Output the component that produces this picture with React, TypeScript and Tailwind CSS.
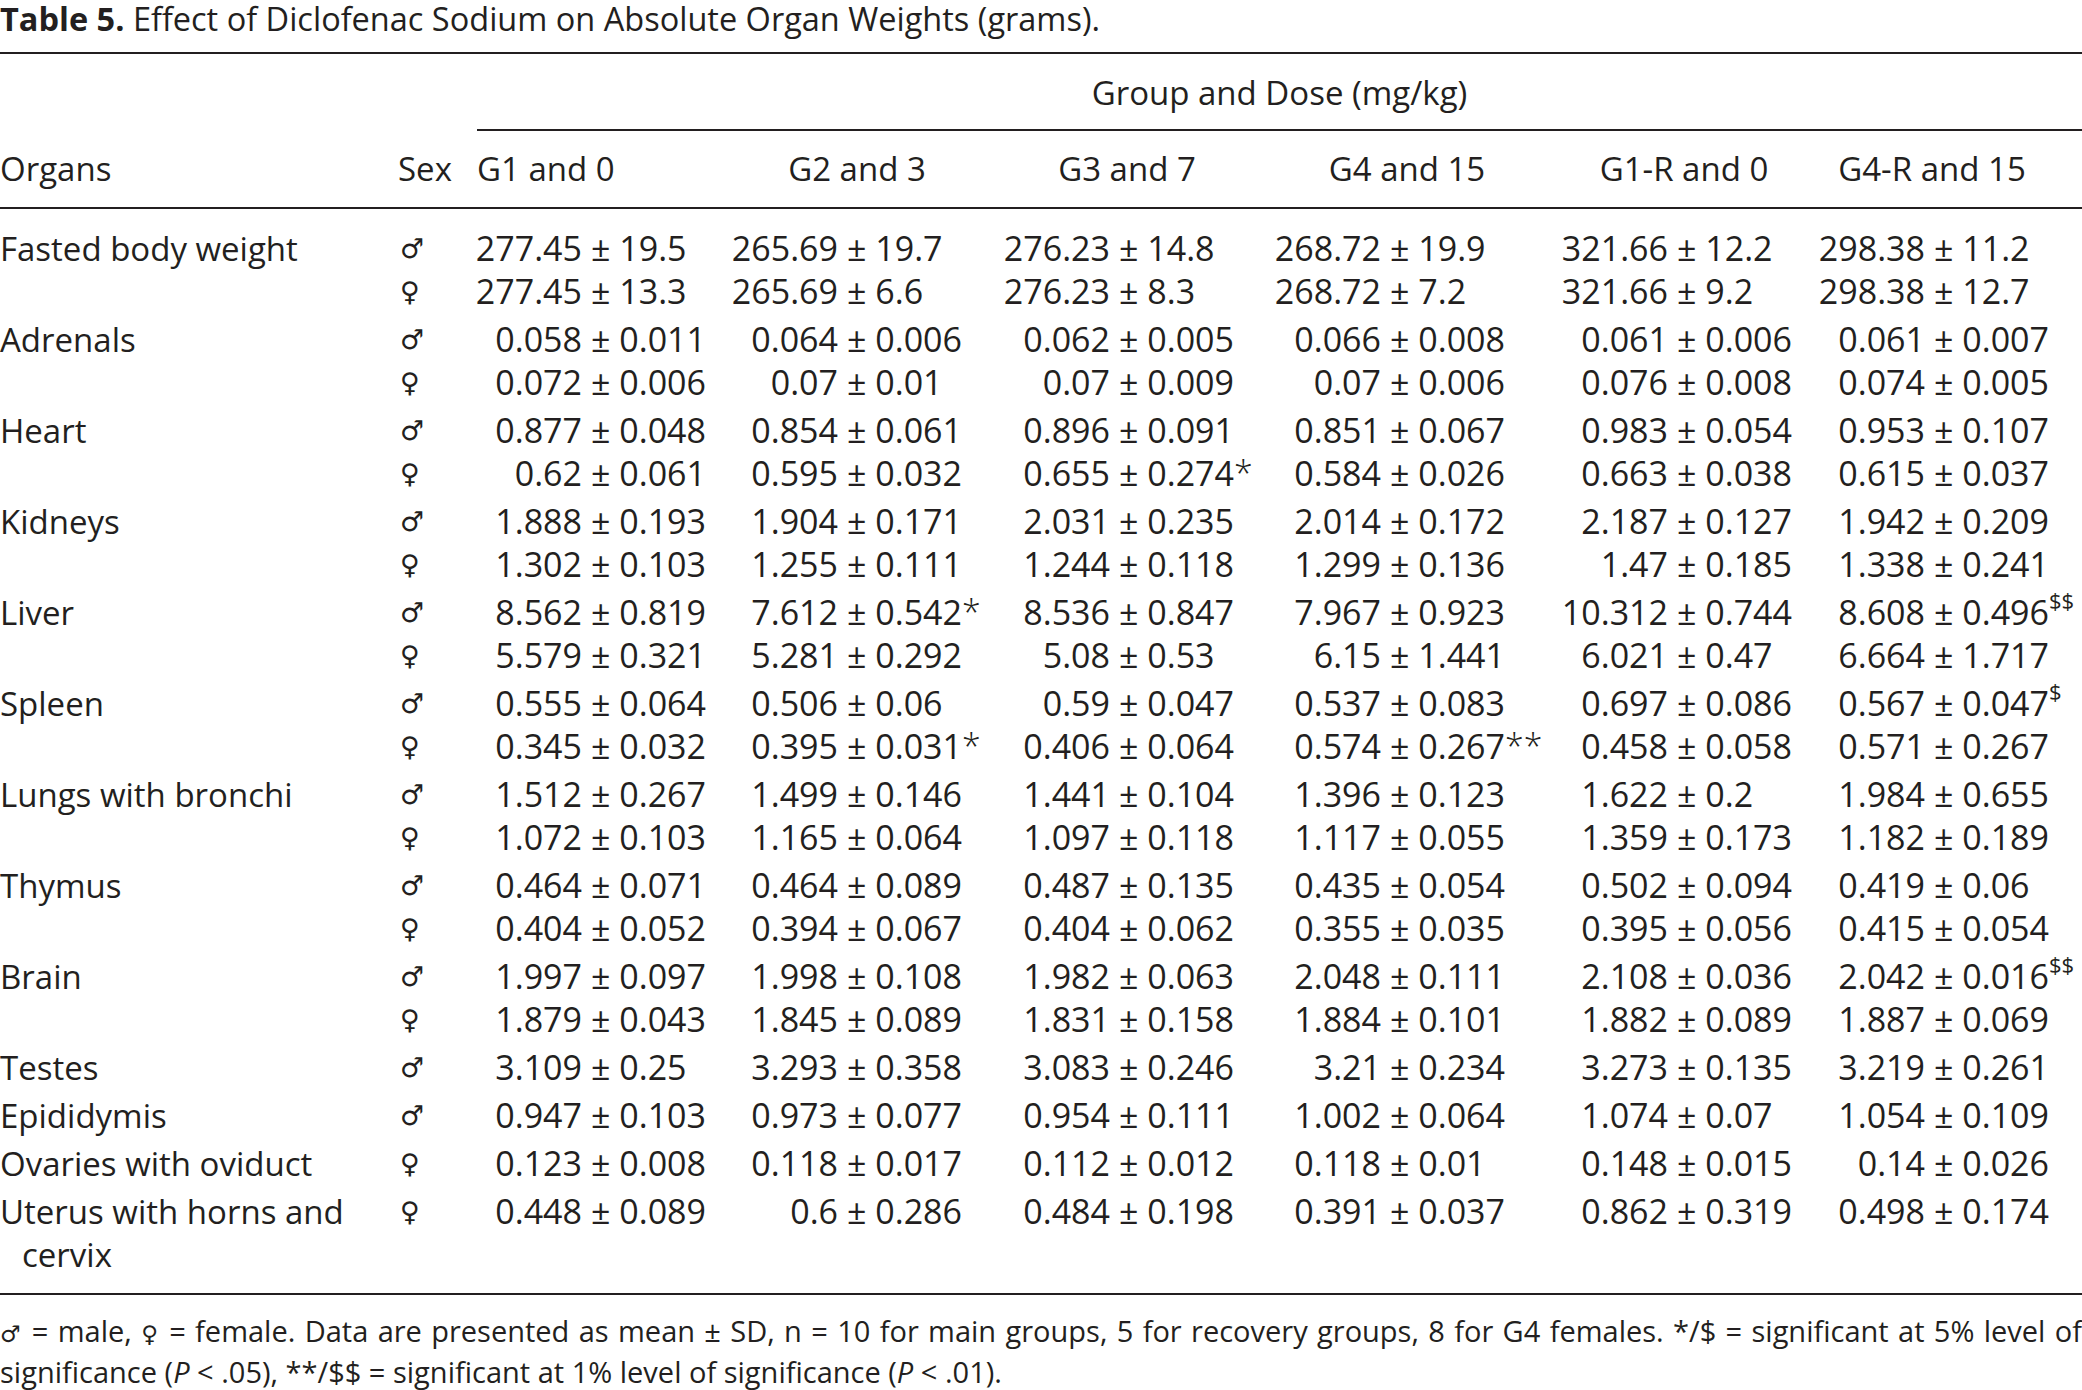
const GRID =
  "grid grid-cols-[398px_62px_131px_134px_122px_138px_134px_141px_130px_150px_137px_123px_134px_148px]";

type Row = { sex: "♂" | "♀"; values: string[] };
type Organ = { name: string; rows: Row[] };

const ORGANS: Organ[] = [
  {
    name: "Fasted body weight",
    rows: [
      { sex: "♂", values: ["277.45 ± 19.5", "265.69 ± 19.7", "276.23 ± 14.8", "268.72 ± 19.9", "321.66 ± 12.2", "298.38 ± 11.2"] },
      { sex: "♀", values: ["277.45 ± 13.3", "265.69 ± 6.6", "276.23 ± 8.3", "268.72 ± 7.2", "321.66 ± 9.2", "298.38 ± 12.7"] },
    ],
  },
  {
    name: "Adrenals",
    rows: [
      { sex: "♂", values: ["0.058 ± 0.011", "0.064 ± 0.006", "0.062 ± 0.005", "0.066 ± 0.008", "0.061 ± 0.006", "0.061 ± 0.007"] },
      { sex: "♀", values: ["0.072 ± 0.006", "0.07 ± 0.01", "0.07 ± 0.009", "0.07 ± 0.006", "0.076 ± 0.008", "0.074 ± 0.005"] },
    ],
  },
  {
    name: "Heart",
    rows: [
      { sex: "♂", values: ["0.877 ± 0.048", "0.854 ± 0.061", "0.896 ± 0.091", "0.851 ± 0.067", "0.983 ± 0.054", "0.953 ± 0.107"] },
      { sex: "♀", values: ["0.62 ± 0.061", "0.595 ± 0.032", "0.655 ± 0.274*", "0.584 ± 0.026", "0.663 ± 0.038", "0.615 ± 0.037"] },
    ],
  },
  {
    name: "Kidneys",
    rows: [
      { sex: "♂", values: ["1.888 ± 0.193", "1.904 ± 0.171", "2.031 ± 0.235", "2.014 ± 0.172", "2.187 ± 0.127", "1.942 ± 0.209"] },
      { sex: "♀", values: ["1.302 ± 0.103", "1.255 ± 0.111", "1.244 ± 0.118", "1.299 ± 0.136", "1.47 ± 0.185", "1.338 ± 0.241"] },
    ],
  },
  {
    name: "Liver",
    rows: [
      { sex: "♂", values: ["8.562 ± 0.819", "7.612 ± 0.542*", "8.536 ± 0.847", "7.967 ± 0.923", "10.312 ± 0.744", "8.608 ± 0.496$$"] },
      { sex: "♀", values: ["5.579 ± 0.321", "5.281 ± 0.292", "5.08 ± 0.53", "6.15 ± 1.441", "6.021 ± 0.47", "6.664 ± 1.717"] },
    ],
  },
  {
    name: "Spleen",
    rows: [
      { sex: "♂", values: ["0.555 ± 0.064", "0.506 ± 0.06", "0.59 ± 0.047", "0.537 ± 0.083", "0.697 ± 0.086", "0.567 ± 0.047$"] },
      { sex: "♀", values: ["0.345 ± 0.032", "0.395 ± 0.031*", "0.406 ± 0.064", "0.574 ± 0.267**", "0.458 ± 0.058", "0.571 ± 0.267"] },
    ],
  },
  {
    name: "Lungs with bronchi",
    rows: [
      { sex: "♂", values: ["1.512 ± 0.267", "1.499 ± 0.146", "1.441 ± 0.104", "1.396 ± 0.123", "1.622 ± 0.2", "1.984 ± 0.655"] },
      { sex: "♀", values: ["1.072 ± 0.103", "1.165 ± 0.064", "1.097 ± 0.118", "1.117 ± 0.055", "1.359 ± 0.173", "1.182 ± 0.189"] },
    ],
  },
  {
    name: "Thymus",
    rows: [
      { sex: "♂", values: ["0.464 ± 0.071", "0.464 ± 0.089", "0.487 ± 0.135", "0.435 ± 0.054", "0.502 ± 0.094", "0.419 ± 0.06"] },
      { sex: "♀", values: ["0.404 ± 0.052", "0.394 ± 0.067", "0.404 ± 0.062", "0.355 ± 0.035", "0.395 ± 0.056", "0.415 ± 0.054"] },
    ],
  },
  {
    name: "Brain",
    rows: [
      { sex: "♂", values: ["1.997 ± 0.097", "1.998 ± 0.108", "1.982 ± 0.063", "2.048 ± 0.111", "2.108 ± 0.036", "2.042 ± 0.016$$"] },
      { sex: "♀", values: ["1.879 ± 0.043", "1.845 ± 0.089", "1.831 ± 0.158", "1.884 ± 0.101", "1.882 ± 0.089", "1.887 ± 0.069"] },
    ],
  },
  {
    name: "Testes",
    rows: [{ sex: "♂", values: ["3.109 ± 0.25", "3.293 ± 0.358", "3.083 ± 0.246", "3.21 ± 0.234", "3.273 ± 0.135", "3.219 ± 0.261"] }],
  },
  {
    name: "Epididymis",
    rows: [{ sex: "♂", values: ["0.947 ± 0.103", "0.973 ± 0.077", "0.954 ± 0.111", "1.002 ± 0.064", "1.074 ± 0.07", "1.054 ± 0.109"] }],
  },
  {
    name: "Ovaries with oviduct",
    rows: [{ sex: "♀", values: ["0.123 ± 0.008", "0.118 ± 0.017", "0.112 ± 0.012", "0.118 ± 0.01", "0.148 ± 0.015", "0.14 ± 0.026"] }],
  },
  {
    name: "Uterus with horns and cervix",
    rows: [{ sex: "♀", values: ["0.448 ± 0.089", "0.6 ± 0.286", "0.484 ± 0.198", "0.391 ± 0.037", "0.862 ± 0.319", "0.498 ± 0.174"] }],
  },
];

const SYMBOL = "font-['DejaVu_Sans',sans-serif] font-normal text-[27px]";

function Value({ v }: { v: string }) {
  const [mean, rest] = v.split(" ± ");
  const m = rest.match(/^([\d.]+)(\**)(\$*)$/);
  const sd = m ? m[1] : rest;
  const stars = m ? m[2] : "";
  const dollars = m ? m[3] : "";
  return (
    <>
      <div className="text-right pr-[9px] whitespace-nowrap text-[34px]">{mean}</div>
      <div className="whitespace-nowrap text-[34px]">
        ± {sd}
        {stars && <span className="font-light">{stars}</span>}
        {dollars && <sup className="text-[22px] -top-[16px]">{dollars}</sup>}
      </div>
    </>
  );
}

function OrganName({ name }: { name: string }) {
  if (name === "Uterus with horns and cervix") {
    return (
      <div>
        <div>Uterus with horns and</div>
        <div className="pl-[22px]">cervix</div>
      </div>
    );
  }
  return <div>{name}</div>;
}

export default function App() {
  return (
    <div className="w-[2082px] min-h-[1390px] bg-white text-[#231f20] font-['Open_Sans',sans-serif] font-medium">
      {/* Caption */}
      <div className="text-[32.5px] leading-[38px] whitespace-nowrap">
        <span className="font-bold">Table 5.</span> Effect of Diclofenac Sodium on Absolute Organ Weights (grams).
      </div>

      <div className="mt-[14px] border-t-2 border-[#231f20] text-[33px]">
        {/* Spanner header */}
        <div className={`${GRID} h-[77px]`}>
          <div className="col-start-3 col-span-12 ml-[17px] pt-[3px] border-b-2 border-[#231f20] flex items-center justify-center">
            Group and Dose (mg/kg)
          </div>
        </div>

        {/* Column headers */}
        <div className={`${GRID} h-[78px] items-center border-b-2 border-[#231f20]`}>
          <div>Organs</div>
          <div>Sex</div>
          <div className="col-span-2 pl-[17px]">G1 and 0</div>
          <div className="col-span-2 text-center pl-[4px]">G2 and 3</div>
          <div className="col-span-2 text-center pl-[9px]">G3 and 7</div>
          <div className="col-span-2 text-center pl-[14px]">G4 and 15</div>
          <div className="col-span-2 text-center pl-[28px]">G1-R and 0</div>
          <div className="col-span-2 text-center pr-[18px]">G4-R and 15</div>
        </div>

        {/* Body */}
        <div className="pt-[18px] pb-[17px] border-b-2 border-[#231f20] leading-[43px]">
          {ORGANS.map((organ, gi) => (
            <div key={organ.name} className={gi === 0 ? "" : "mt-[5px]"}>
              {organ.rows.map((row, ri) => (
                <div key={ri} className={GRID}>
                  {ri === 0 ? <OrganName name={organ.name} /> : <div />}
                  <div className={`pl-[2px] ${SYMBOL}`}>{row.sex}</div>
                  {row.values.map((v, vi) => (
                    <Value key={vi} v={v} />
                  ))}
                </div>
              ))}
            </div>
          ))}
        </div>
      </div>

      {/* Footnote */}
      <div className="pt-[17px] text-[29px] leading-[38px]">
        <div className="text-justify [text-align-last:justify] whitespace-nowrap">
          <span className="font-['DejaVu_Sans',sans-serif] font-normal text-[23px]">♂</span> = male,{" "}
          <span className="font-['DejaVu_Sans',sans-serif] font-normal text-[23px]">♀</span> = female. Data are presented as
          mean ± SD, n = 10 for main groups, 5 for recovery groups, 8 for G4 females. */$ = significant at 5% level of
        </div>
        <div className="whitespace-nowrap">
          significance (<span className="italic">P</span> &lt; .05), **/$$ = significant at 1% level of significance (
          <span className="italic">P</span> &lt; .01).
        </div>
      </div>
    </div>
  );
}
